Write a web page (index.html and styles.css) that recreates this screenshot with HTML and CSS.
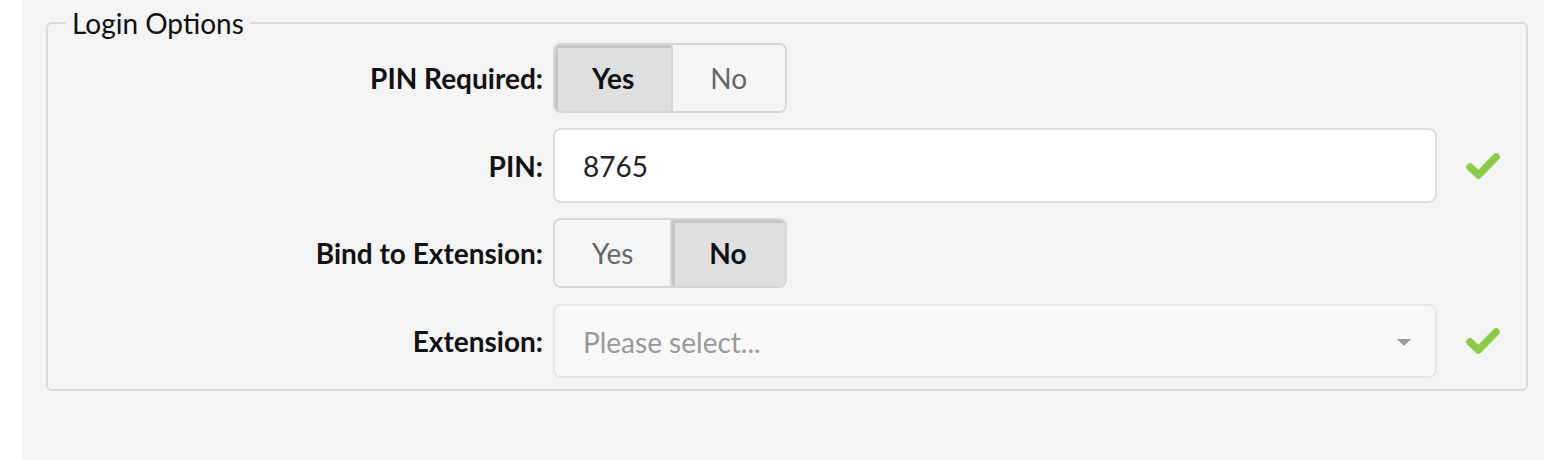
FILE: index.html
```html
<!DOCTYPE html>
<html lang="en">
<head>
  <meta charset="UTF-8" />
  <title>Login Options</title>
  <link rel="stylesheet" href="styles.css">
</head>
<body>
  <div class="panel">
    <fieldset class="options">
      <legend>Login Options</legend>

      <div class="form-grid">
        <label class="field-label">PIN Required:</label>
        <div class="toggle">
          <span class="toggle-btn active">Yes</span>
          <span class="toggle-btn">No</span>
        </div>
        <div class="status"></div>

        <label class="field-label">PIN:</label>
        <div class="text-input">8765</div>
        <div class="status">
          <svg class="check" width="34" height="28" viewBox="0 0 34 28">
            <polyline points="4,15 12.5,23 30,5" fill="none" stroke="#8acb45" stroke-width="7.5" stroke-linecap="round" stroke-linejoin="round"/>
          </svg>
        </div>

        <label class="field-label">Bind to Extension:</label>
        <div class="toggle">
          <span class="toggle-btn">Yes</span>
          <span class="toggle-btn active">No</span>
        </div>
        <div class="status"></div>

        <label class="field-label">Extension:</label>
        <div class="select-input">
          <span class="placeholder">Please select...</span>
          <span class="caret"></span>
        </div>
        <div class="status">
          <svg class="check" width="34" height="28" viewBox="0 0 34 28">
            <polyline points="4,15 12.5,23 30,5" fill="none" stroke="#8acb45" stroke-width="7.5" stroke-linecap="round" stroke-linejoin="round"/>
          </svg>
        </div>
      </div>
    </fieldset>
  </div>
</body>
</html>
```

FILE: styles.css
```css
* {
  box-sizing: border-box;
}

body {
  margin: 0;
  background: #fff;
  font-family: 'Lato', 'Liberation Sans', sans-serif;
  color: #111;
}

.panel {
  margin-left: 22px;
  height: 460px;
  background: #f4f4f4;
  padding: 3px 16px 0 24px;
}

.options {
  margin: 0;
  padding: 0 0 11px 0;
  border: 2px solid #d9d9d9;
  border-radius: 6px;
}

.options legend {
  margin-left: 18px;
  padding: 0 6px 0 6px;
  font-size: 28px;
  line-height: 40px;
  color: #111;
}

.form-grid {
  display: grid;
  grid-template-columns: 495px 884px 1fr;
  column-gap: 10px;
  row-gap: 15px;
  align-items: center;
}

.field-label {
  text-align: right;
  font-weight: bold;
  font-size: 28px;
  color: #111;
}

.toggle {
  display: inline-flex;
  justify-self: start;
  height: 70px;
  border: 2px solid #d6d6d6;
  border-radius: 8px;
  overflow: hidden;
}

.toggle-btn {
  display: flex;
  align-items: center;
  justify-content: center;
  padding: 0 37px;
  font-size: 28px;
  color: #666;
  background: #f5f5f5;
}

.toggle-btn + .toggle-btn {
  border-left: 2px solid #d6d6d6;
  padding-right: 38px;
}

.toggle-btn.active {
  background: #dfdfdf;
  color: #111;
  font-weight: bold;
  box-shadow: inset 3px 3px 0 #c6c6c6;
}

.text-input {
  height: 75px;
  display: flex;
  align-items: center;
  padding: 0 28px;
  background: #fff;
  border: 2px solid #dedede;
  border-radius: 8px;
  font-size: 28px;
  color: #222;
}

.select-input {
  height: 74px;
  margin-top: 1px;
  display: flex;
  align-items: center;
  justify-content: space-between;
  padding: 2px 24px 0 28px;
  background: #f8f8f8;
  border: 2px solid #e7e7e7;
  border-radius: 8px;
  font-size: 28px;
}

.placeholder {
  color: #999;
}

.caret {
  width: 0;
  height: 0;
  border-left: 7px solid transparent;
  border-right: 7px solid transparent;
  border-top: 7px solid #999;
}

.status {
  padding-left: 19px;
  display: flex;
  align-items: center;
}
```
